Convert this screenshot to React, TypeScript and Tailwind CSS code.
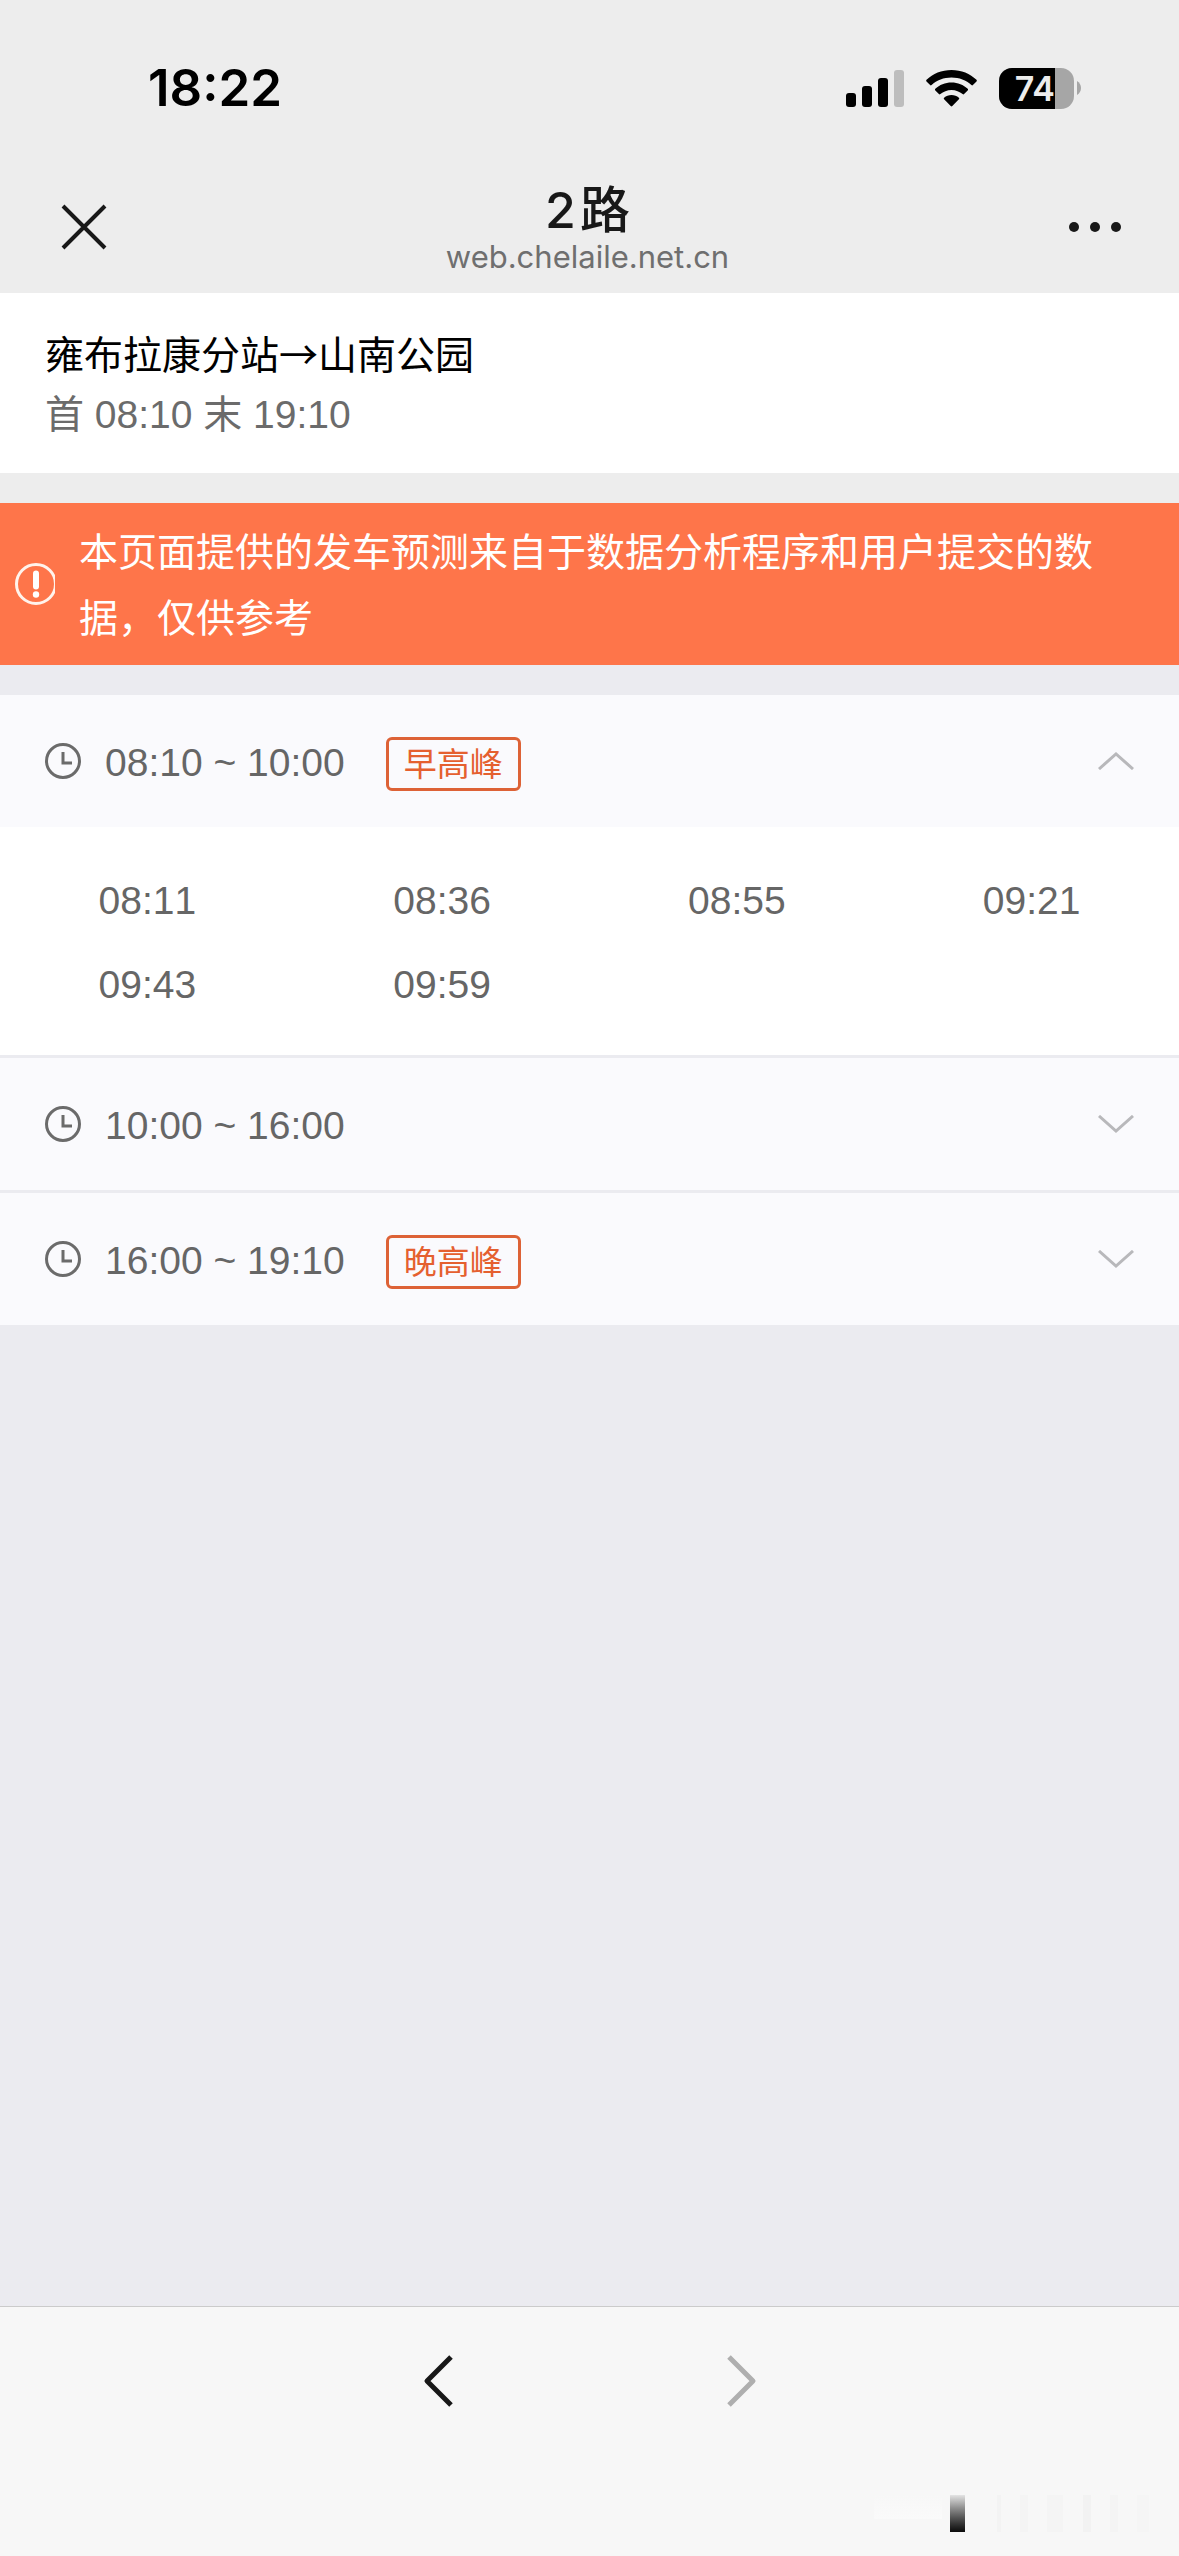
import React, { useState } from "react";

interface Period {
  id: string;
  range: string;
  tag: string | null;
  times: string[];
}

const periods: Period[] = [
  {
    id: "morning",
    range: "08:10 ~ 10:00",
    tag: "早高峰",
    times: ["08:11", "08:36", "08:55", "09:21", "09:43", "09:59"],
  },
  { id: "day", range: "10:00 ~ 16:00", tag: null, times: [] },
  { id: "evening", range: "16:00 ~ 19:10", tag: "晚高峰", times: [] },
];

const StatusBar = () => (
  <div className="flex h-[160px] items-center justify-between pt-4 pr-[98px] pl-[148px] text-black">
    <span className="text-[51px] leading-[60px] font-semibold">18:22</span>
    <div className="flex items-center gap-[22px]">
      {/* 信号 */}
      <svg width="58" height="38" viewBox="0 0 58 38" aria-hidden="true">
        <rect x="0" y="24" width="10" height="14" rx="3" />
        <rect x="16" y="17" width="10" height="21" rx="3" />
        <rect x="32" y="9" width="10" height="29" rx="3" />
        <rect x="48" y="1" width="10" height="37" rx="3" fill="#bdbdbd" />
      </svg>
      {/* Wi-Fi */}
      <svg width="51" height="38" viewBox="0 0 51 38" aria-hidden="true">
        <path d="M25.5 1C15.700 1 6.800 4.700.5 10.800q-.7.800 0 1.600l3.600 3.700q.7.700 1.500 0C10.800 11.300 17.800 8.600 25.500 8.600s14.700 2.700 19.900 7.500q.8.700 1.500 0l3.600-3.700q.7-.8 0-1.600C44.200 4.700 35.300 1 25.500 1z" />
        <path d="M25.500 13.500c-6.300 0-12 2.400-16.200 6.300q-.8.800 0 1.600l3.600 3.700q.7.700 1.500 0c2.900-2.600 6.800-4.200 11.100-4.200s8.200 1.600 11.100 4.200q.8.700 1.500 0l3.600-3.700q.8-.8 0-1.600c-4.200-3.900-9.900-6.300-16.200-6.300z" />
        <path d="M25.500 26c-2.800 0-5.400 1-7.400 2.700q-.8.800 0 1.600l6.600 6.800q.8.800 1.600 0l6.600-6.800q.8-.8 0-1.600C30.900 27 28.300 26 25.500 26z" />
      </svg>
      {/* 电量 */}
      <div className="flex items-center gap-[3px]">
        <div className="flex h-[41px] w-[75px] overflow-hidden rounded-[13px] bg-[#a6a6a6]">
          <span className="flex w-[56px] items-center justify-end bg-black text-[34px] leading-[41px] font-semibold text-[#ececec]">
            74
          </span>
        </div>
        <svg width="4" height="14" viewBox="0 0 4 14" aria-hidden="true">
          <path d="M0 0c2.500 1.500 4 4 4 7s-1.500 5.500-4 7z" fill="#a6a6a6" />
        </svg>
      </div>
    </div>
  </div>
);

const NavBar = () => (
  <div className="grid h-[133px] grid-cols-[1fr_auto_1fr] items-center px-[58px] text-[#181818]">
    <button type="button" aria-label="关闭" className="justify-self-start">
      <svg width="52" height="52" viewBox="0 0 52 52" fill="none" stroke="currentColor" strokeWidth="4">
        <path d="M5 5l42 42M47 5L5 47" />
      </svg>
    </button>
    <div className="pr-1 text-center">
      <h1 className="text-[50px] leading-[60px] font-medium">
        2<span className="ml-1">路</span>
      </h1>
      <p className="text-[31px] leading-[34px] text-[#6f6f6f]">web.chelaile.net.cn</p>
    </div>
    <button type="button" aria-label="更多" className="justify-self-end">
      <svg width="52" height="52" viewBox="0 0 52 52" fill="currentColor">
        <circle cx="5" cy="26" r="5" />
        <circle cx="26" cy="26" r="5" />
        <circle cx="47" cy="26" r="5" />
      </svg>
    </button>
  </div>
);

const ClockIcon = () => (
  <svg width="36" height="36" viewBox="0 0 36 36" fill="none" stroke="#6b6b6b" strokeWidth="3" aria-hidden="true">
    <circle cx="18" cy="18" r="16.500" />
    <path d="M18 9v11h9" />
  </svg>
);

const Chevron = ({ open }: { open: boolean }) => (
  <svg width="36" height="18" viewBox="0 0 36 18" fill="none" stroke="#b8b8bb" strokeWidth="3" aria-hidden="true">
    <path d={open ? "M1 17L18 2l17 15" : "M1 1l17 15L35 1"} />
  </svg>
);

const App = () => {
  const [openId, setOpenId] = useState<string | null>("morning");

  const toggle = (id: string) => {
    setOpenId((current) => (current === id ? null : id));
  };

  return (
    <div
      lang="zh-CN"
      className="flex min-h-screen flex-col bg-[#ebebf0] font-['Liberation_Sans','Noto_Sans_CJK_SC',sans-serif]"
    >
      <header className="bg-[#ededed] font-['Inter','Noto_Sans_CJK_SC',sans-serif]">
        <StatusBar />
        <NavBar />
      </header>

      <main className="flex-1 text-[39px] [font-kerning:none]">
        {/* 线路信息 */}
        <section className="border-b-[30px] border-[#ededed] bg-white px-[45px] pt-[30px] pb-6">
          <h2 className="leading-[58px] font-normal text-black font-['Noto_Sans_CJK_SC',sans-serif]">
            雍布拉康分站→山南公园
          </h2>
          <p className="leading-[68px] text-[#6b6b6b]">首 08:10 末 19:10</p>
        </section>

        {/* 提示 */}
        <div role="note" className="flex items-center bg-[#fe754a] py-[13px] pr-[80px] pl-[15px] text-white">
          <svg width="40" height="42" viewBox="0 0 40 42" className="mr-6 shrink-0" fill="none" aria-hidden="true">
            <circle cx="21" cy="21" r="19.500" stroke="#fff3ec" strokeWidth="3" />
            <path d="M21 10.500v13" stroke="#fff" strokeWidth="6" strokeLinecap="round" />
            <circle cx="21" cy="31.500" r="3.200" fill="#fff" />
          </svg>
          <p className="pt-1 leading-[66px]">
            本页面提供的发车预测来自于数据分析程序和用户提交的数据，仅供参考
          </p>
        </div>

        {/* 发车时段 */}
        <div className="mt-[30px] divide-y-[3px] divide-[#ebebf0] text-[#666]">
          {periods.map((period) => {
            const open = openId === period.id;
            return (
              <section key={period.id}>
                <button
                  type="button"
                  aria-expanded={open}
                  onClick={() => toggle(period.id)}
                  className="flex h-[132px] w-full items-center bg-[#fafafd] px-[45px] text-left"
                >
                  <ClockIcon />
                  <span className="ml-6 pt-1">{period.range}</span>
                  {period.tag && (
                    <span className="mt-1.5 ml-[41px] rounded-md border-[3px] border-[#dd6236] px-[15px] pt-0.5 text-[33px] leading-[46px] text-[#e5602f]">
                      {period.tag}
                    </span>
                  )}
                  <span className="ml-auto">
                    <Chevron open={open} />
                  </span>
                </button>
                {open && period.times.length > 0 && (
                  <ul className="grid grid-cols-4 bg-white pt-8 pb-7 text-center">
                    {period.times.map((time) => (
                      <li key={time} className="leading-[84px]">
                        {time}
                      </li>
                    ))}
                  </ul>
                )}
              </section>
            );
          })}
        </div>
      </main>

      <footer className="flex h-[250px] flex-col border-t border-[#cbcbcb] bg-[#f7f7f7]">
        <nav className="flex h-[148px] items-center justify-center gap-[270px]">
          <button type="button" aria-label="后退">
            <svg width="32" height="52" viewBox="0 0 32 52" fill="none" stroke="#181818" strokeWidth="5">
              <path d="M28 2L4 26l24 24" strokeLinejoin="round" />
            </svg>
          </button>
          <button type="button" aria-label="前进" disabled>
            <svg width="32" height="52" viewBox="0 0 32 52" fill="none" stroke="#afafaf" strokeWidth="5">
              <path d="M4 2l24 24L4 50" strokeLinejoin="round" />
            </svg>
          </button>
        </nav>
        <div className="mt-10 flex h-[37px] items-stretch justify-end pr-[30px]">
          <div className="mr-2 h-6 w-[68px] bg-linear-to-b from-[#f7f7f7] to-[#fafafa]" />
          <div className="w-[15px] bg-linear-to-b from-[#e4e4e4] to-[#0c0c0c]" />
          <div className="ml-8 flex w-[152px] justify-between">
            <span className="w-1 bg-[#f3f3f3]" />
            <span className="w-2 bg-[#f4f4f4]" />
            <span className="w-4 bg-[#f4f4f4]" />
            <span className="w-2 bg-[#f2f2f2]" />
            <span className="w-2 bg-[#f4f4f4]" />
            <span className="w-3 bg-[#f5f5f5]" />
          </div>
        </div>
      </footer>
    </div>
  );
};

export default App;
